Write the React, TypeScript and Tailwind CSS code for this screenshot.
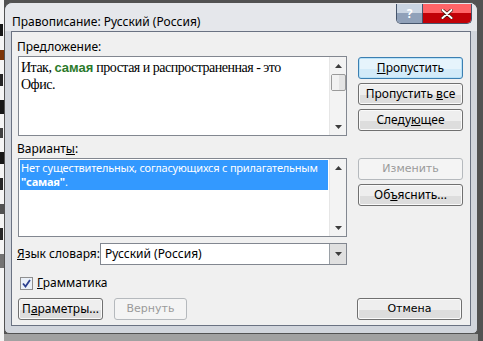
const ui = { fontFamily: '"Noto Sans", "Open Sans", sans-serif' };
const tahoma = { fontFamily: '"DejaVu Sans", Verdana, sans-serif' };

const Btn = ({
  children,
  w = "w-[105px]",
  disabled = false,
  focused = false,
}: {
  children: React.ReactNode;
  w?: string;
  disabled?: boolean;
  focused?: boolean;
}) => (
  <div
    className={`${w} h-[22px] rounded-[3px] border flex flex-col overflow-hidden relative text-[12px] ${
      disabled
        ? "border-[#b5b9bd] bg-[#f4f4f4] text-[#9a9a9a]"
        : focused
        ? "border-[#3c7fb1] bg-[#d3ebf9] text-black shadow-[inset_0_0_0_1px_#b8e2f8]"
        : "border-[#707070] bg-[#dddddd] text-black shadow-[inset_0_0_0_1px_#fafafa]"
    }`}
    style={ui}
  >
    {!disabled && (
      <div className={`h-[10px] mx-px mt-px ${focused ? "bg-[#e6f4fc]" : "bg-[#eeeeee]"}`} />
    )}
    <div className="absolute inset-0 flex items-center justify-center">{children}</div>
  </div>
);

const Arrow = ({ up }: { up?: boolean }) => (
  <svg width="7" height="4" viewBox="0 0 7 4">
    <path d={up ? "M0 4 L3.5 0 L7 4 Z" : "M0 0 L7 0 L3.5 4 Z"} fill="#3d3d3d" />
  </svg>
);

const ScrollBar = ({ thumb }: { thumb?: boolean }) => (
  <div className="w-[17px] h-full bg-[#f3f3f3] border-l border-[#e6e6e6] flex flex-col items-center">
    <div className="h-[17px] flex items-center justify-center">
      <Arrow up />
    </div>
    {thumb && (
      <div className="w-[15px] h-[17px] rounded-[2px] border border-[#9a9a9a] bg-[#e4e4e4] flex">
        <div className="w-[7px] h-full bg-[#f2f2f2]" />
      </div>
    )}
    <div className="flex-1" />
    <div className="h-[17px] flex items-center justify-center">
      <Arrow />
    </div>
  </div>
);

export default function App() {
  return (
    <div className="w-[483px] h-[341px] bg-neutral-600 flex overflow-hidden">
      {/* document behind the dialog */}
      <div className="w-[4px] h-full bg-neutral-100 flex flex-col gap-[14px] pt-[24px]">
        <div className="h-[12px] w-[3px] bg-neutral-900" />
        <div className="h-[10px] w-[4px] bg-amber-900" />
        <div className="h-[12px] w-[3px] bg-neutral-800" />
        <div className="h-[14px] w-[4px] bg-neutral-900" />
        <div className="h-[10px] w-[3px] bg-neutral-700" />
        <div className="h-[12px] w-[4px] bg-neutral-900" />
        <div className="h-[12px] w-[3px] bg-neutral-800" />
        <div className="h-[10px] w-[4px] bg-neutral-600" />
        <div className="h-[12px] w-[3px] bg-neutral-800" />
        <div className="h-[14px] w-[4px] bg-neutral-500" />
      </div>

      <div className="flex flex-col">
        {/* window */}
        <div className="mt-[2px] w-[474px] h-[332px] rounded-t-[8px] rounded-b-[5px] border border-neutral-600 bg-gray-300 flex flex-col">
          {/* title bar */}
          <div className="h-[28px] flex items-start pl-[7px] pr-[5px] rounded-t-[8px] bg-gray-200">
            <div className="mt-[11px] text-[12px] leading-[16px] text-black" style={ui}>
              Правописание: Русский (Россия)
            </div>
            <div className="ml-auto flex mt-[1px] rounded-b-[5px] border border-t-0 border-slate-600 overflow-hidden">
              <div className="w-[26px] h-[19px] bg-slate-400 border-r border-slate-600 flex flex-col relative">
                <div className="h-[9px] bg-slate-300" />
                <div className="absolute inset-0 flex items-center justify-center">
                  <span className="text-[12px] font-bold leading-none text-white" style={ui}>
                    ?
                  </span>
                </div>
              </div>
              <div className="w-[48px] h-[19px] bg-red-700 flex flex-col relative">
                <div className="h-[9px] bg-red-400" />
                <div className="absolute inset-0 flex items-center justify-center">
                  <svg width="12" height="10" viewBox="0 0 12 10">
                    <path d="M1.5 1 L10.5 9 M10.5 1 L1.5 9" stroke="#4a1a10" strokeWidth="3.4" strokeLinecap="round" />
                    <path d="M1.5 1 L10.5 9 M10.5 1 L1.5 9" stroke="#ffffff" strokeWidth="2" strokeLinecap="round" />
                  </svg>
                </div>
              </div>
            </div>
          </div>

          {/* client area */}
          <div className="mx-[6px] h-[295px] bg-[#f0f0f0] border border-gray-500 pl-[6px] pt-[7px] flex flex-col text-black" style={ui}>
            <div className="grid grid-cols-[329px_105px] gap-x-[11px]">
              <div className="-ml-px h-[17px] text-[12px] leading-[16px]">
                Пре<span className="underline">д</span>ложение:
              </div>
              <div />

              {/* sentence box */}
              <div className="h-[80px] border border-[#828790] bg-white flex">
                <div
                  className="flex-1 pl-[2px] pt-[2px] text-[14px] leading-[17px] tracking-[-0.5px]"
                  style={{ fontFamily: '"Liberation Serif", "Times New Roman", serif' }}
                >
                  Итак,{" "}
                  <span
                    className="font-bold text-[13px] leading-[17px] tracking-normal text-[#2b7a2b]"
                    style={{ fontFamily: '"Liberation Sans", Arial, sans-serif' }}
                  >
                    самая
                  </span>{" "}
                  простая и распространенная - это
                  <br />
                  Офис.
                </div>
                <ScrollBar thumb />
              </div>
              <div className="flex flex-col gap-[4px] pt-[1px]">
                <Btn focused>
                  <span><span className="underline">П</span>ропустить</span>
                </Btn>
                <Btn>
                  <span>Пропустить <span className="underline">в</span>се</span>
                </Btn>
                <Btn>
                  <span>Следу<span className="underline">ю</span>щее</span>
                </Btn>
              </div>

              <div className="-ml-px h-[22px] pt-[5px] text-[12px] leading-[16px]">
                Вариант<span className="underline">ы</span>:
              </div>
              <div />

              {/* suggestions */}
              <div className="h-[79px] border border-[#828790] bg-white flex">
                <div className="flex-1 p-[1px]">
                  <div className="bg-[#3399ff] text-white text-[11px] leading-[14px] tracking-[-0.2px] pl-[1px] py-[1px]">
                    Нет существительных, согласующихся с прилагательным{" "}
                    <span className="font-bold">"самая"</span>.
                  </div>
                </div>
                <ScrollBar />
              </div>
              <div className="flex flex-col gap-[4px]">
                <Btn disabled>
                  <span style={tahoma} className="text-[11px]">Изменить</span>
                </Btn>
                <Btn>
                  <span>Об<span className="underline">ъ</span>яснить...</span>
                </Btn>
              </div>
            </div>

            {/* dictionary language */}
            <div className="mt-[6px] flex items-center w-[329px]">
              <div className="-ml-px w-[83px] text-[12px] leading-[16px]">
                <span className="underline">Я</span>зык словаря:
              </div>
              <div className="flex-1 h-[22px] border border-[#828790] bg-white flex items-center">
                <div className="flex-1 pl-[4px] text-[12px]">Русский (Россия)</div>
                <div className="w-[17px] h-[20px] border-l border-[#9aa0a6] bg-[#e0e0e0] flex items-center justify-center">
                  <Arrow />
                </div>
              </div>
            </div>

            {/* grammar */}
            <div className="mt-[10px] flex items-center h-[16px] pl-[2px]">
              <div className="w-[13px] h-[13px] border border-[#8f8f8f] bg-[#eaf0f8] flex items-center justify-center">
                <svg width="9" height="9" viewBox="0 0 9 9">
                  <path d="M1 4.5 L3.5 7.5 L8 1" stroke="#2b3f8f" strokeWidth="1.8" fill="none" />
                </svg>
              </div>
              <div className="ml-[4px] text-[12px]">
                <span className="underline">Г</span>рамматика
              </div>
            </div>

            {/* bottom buttons */}
            <div className="mt-[7px] flex">
              <Btn w="w-[85px]">
                <span>П<span className="underline">а</span>раметры...</span>
              </Btn>
              <div className="ml-[11px]">
                <Btn w="w-[73px]" disabled>
                  <span style={tahoma} className="text-[11px]">Вернуть</span>
                </Btn>
              </div>
              <div className="ml-auto mr-[8px]">
                <Btn>
                  <span style={tahoma} className="text-[11px]">Отмена</span>
                </Btn>
              </div>
            </div>
          </div>
        </div>
        <div className="flex-1 bg-neutral-400" />
      </div>
    </div>
  );
}
